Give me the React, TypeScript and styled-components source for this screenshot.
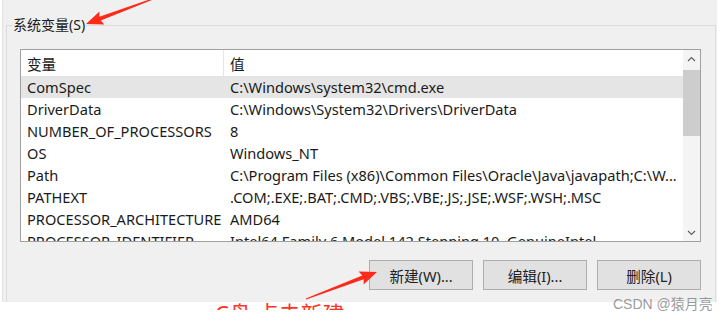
import React from "react"
import styled, { createGlobalStyle } from "styled-components"

const GlobalStyle = createGlobalStyle`
  body {
    margin: 0;
    background: #ffffff;
    font-family: "Noto Sans", "Noto Sans CJK SC", sans-serif;
    font-size: 14.6px;
    color: #1a1a1a;
  }
`

const Page = styled.div`
  position: relative;
  width: 728px;
  height: 316px;
  overflow: hidden;
  background: #ffffff;
`

const Window = styled.div`
  margin-left: 2px;
  width: 714px;
  height: 302px;
  border-left: 1px solid #e2e2e2;
  background: #f0f0f0;
  overflow: hidden;
`

const GroupBox = styled.fieldset`
  margin: 16px 1px 0 3px;
  padding: 15px 0 0 6px;
  height: 320px;
  border: 1px solid #dcdcdc;
  min-inline-size: 0;
`

const GroupTitle = styled.legend`
  padding: 0 1px 0 0;
  line-height: 18px;
  font-size: 14px;
  color: #1a1a1a;
`

const ListBox = styled.div`
  margin-left: 7px;
  width: 679px;
  height: 191px;
  border: 1px solid #a0a0a0;
  background: #ffffff;
  display: flex;
  overflow: hidden;
`

const Table = styled.div`
  flex: 1;
  min-width: 0;
  display: flex;
  flex-direction: column;
`

const HeaderRow = styled.div`
  display: grid;
  grid-template-columns: 203px 1fr;
  height: 26px;
  flex-shrink: 0;
  align-items: center;
  background: #ffffff;
`

const HeaderCell = styled.div<{ $divider?: boolean }>`
  height: 100%;
  display: flex;
  align-items: center;
  padding-left: 6px;
  border-right: ${p => (p.$divider ? "1px solid #e5e5e5" : "none")};
  box-sizing: border-box;
`

const Row = styled.div<{ $selected?: boolean }>`
  display: grid;
  grid-template-columns: 203px 1fr;
  height: 22px;
  flex-shrink: 0;
  align-items: center;
  background: ${p => (p.$selected ? "#e5e5e5" : "transparent")};
`

const Cell = styled.div`
  padding-left: 6px;
  white-space: nowrap;
  overflow: hidden;
`

const ScrollBar = styled.div`
  width: 17px;
  flex-shrink: 0;
  background: #f4f4f4;
  display: flex;
  flex-direction: column;
`

const ScrollArrow = styled.div`
  height: 17px;
  display: flex;
  align-items: center;
  justify-content: center;
`

const ScrollTrack = styled.div`
  flex: 1;
  padding-top: 3px;
`

const Thumb = styled.div`
  height: 66px;
  background: #cdcdcd;
`

const ButtonRow = styled.div`
  margin-left: 7px;
  margin-top: 18px;
  width: 681px;
  display: flex;
  justify-content: flex-end;
  gap: 10px;
`

const Button = styled.button`
  width: 104px;
  height: 30px;
  padding: 0;
  background: #e1e1e1;
  border: 1px solid #adadad;
  font-family: "Noto Sans", "Noto Sans CJK SC", sans-serif;
  font-size: 14.6px;
  color: #222222;
`

const Watermark = styled.div`
  position: absolute;
  left: 613px;
  top: 296px;
  font-family: "Liberation Sans", "Noto Sans CJK SC", sans-serif;
  font-size: 14px;
  line-height: 17px;
  color: rgba(120, 120, 120, 0.75);
  white-space: nowrap;
`

const NoteStrip = styled.div`
  position: absolute;
  left: 215px;
  top: 302px;
  height: 8px;
  overflow: hidden;
`

const NoteText = styled.div`
  font-family: "Noto Sans", "Noto Sans CJK SC", sans-serif;
  font-size: 22px;
  line-height: 22px;
  color: #ff3326;
  white-space: nowrap;
`

const Overlay = styled.svg`
  position: absolute;
  left: 0;
  top: 0;
  pointer-events: none;
`

type Pt = [number, number]

const arrowPoints = (tail: Pt, head: Pt, headLen = 15, headW = 7, tailW = 1, neckW = 4) => {
  const dx = head[0] - tail[0]
  const dy = head[1] - tail[1]
  const len = Math.hypot(dx, dy)
  const ux = dx / len
  const uy = dy / len
  const nx = -uy
  const ny = ux
  const bx = head[0] - ux * headLen
  const by = head[1] - uy * headLen
  const pts: Pt[] = [
    [tail[0] + nx * tailW / 2, tail[1] + ny * tailW / 2],
    [bx + nx * neckW / 2, by + ny * neckW / 2],
    [bx - ux * 2 + nx * headW, by - uy * 2 + ny * headW],
    head,
    [bx - ux * 2 - nx * headW, by - uy * 2 - ny * headW],
    [bx - nx * neckW / 2, by - ny * neckW / 2],
    [tail[0] - nx * tailW / 2, tail[1] - ny * tailW / 2],
  ]
  return pts.map(p => p.join(",")).join(" ")
}

const Chevron = ({ up }: { up?: boolean }) => (
  <svg width="9" height="6" viewBox="0 0 9 6">
    <polyline
      points={up ? "1,5 4.5,1.5 8,5" : "1,1 4.5,4.5 8,1"}
      fill="none"
      stroke="#606060"
      strokeWidth="1.2"
    />
  </svg>
)

const variables: [string, string][] = [
  ["ComSpec", "C:\\Windows\\system32\\cmd.exe"],
  ["DriverData", "C:\\Windows\\System32\\Drivers\\DriverData"],
  ["NUMBER_OF_PROCESSORS", "8"],
  ["OS", "Windows_NT"],
  ["Path", "C:\\Program Files (x86)\\Common Files\\Oracle\\Java\\javapath;C:\\W..."],
  ["PATHEXT", ".COM;.EXE;.BAT;.CMD;.VBS;.VBE;.JS;.JSE;.WSF;.WSH;.MSC"],
  ["PROCESSOR_ARCHITECTURE", "AMD64"],
  ["PROCESSOR_IDENTIFIER", "Intel64 Family 6 Model 142 Stepping 10, GenuineIntel"],
]

export default function App() {
  return (
    <Page>
      <GlobalStyle />
      <Window>
        <GroupBox>
          <GroupTitle>系统变量(S)</GroupTitle>
          <ListBox>
            <Table>
              <HeaderRow>
                <HeaderCell $divider>变量</HeaderCell>
                <HeaderCell>值</HeaderCell>
              </HeaderRow>
              {variables.map(([name, value], i) => (
                <Row key={name} $selected={i === 0}>
                  <Cell>{name}</Cell>
                  <Cell>{value}</Cell>
                </Row>
              ))}
            </Table>
            <ScrollBar>
              <ScrollArrow>
                <Chevron up />
              </ScrollArrow>
              <ScrollTrack>
                <Thumb />
              </ScrollTrack>
              <ScrollArrow>
                <Chevron />
              </ScrollArrow>
            </ScrollBar>
          </ListBox>
          <ButtonRow>
            <Button>新建(W)...</Button>
            <Button>编辑(I)...</Button>
            <Button>删除(L)</Button>
          </ButtonRow>
        </GroupBox>
      </Window>
      <NoteStrip>
        <NoteText>C盘 点击新建</NoteText>
      </NoteStrip>
      <Watermark>CSDN @猿月亮</Watermark>
      <Overlay width="728" height="316" viewBox="0 0 728 316">
        <polygon points={arrowPoints([158, -3], [86, 24])} fill="#ff2a1a" />
        <polygon points={arrowPoints([306, 299], [377, 272])} fill="#ff2a1a" />
      </Overlay>
    </Page>
  )
}
